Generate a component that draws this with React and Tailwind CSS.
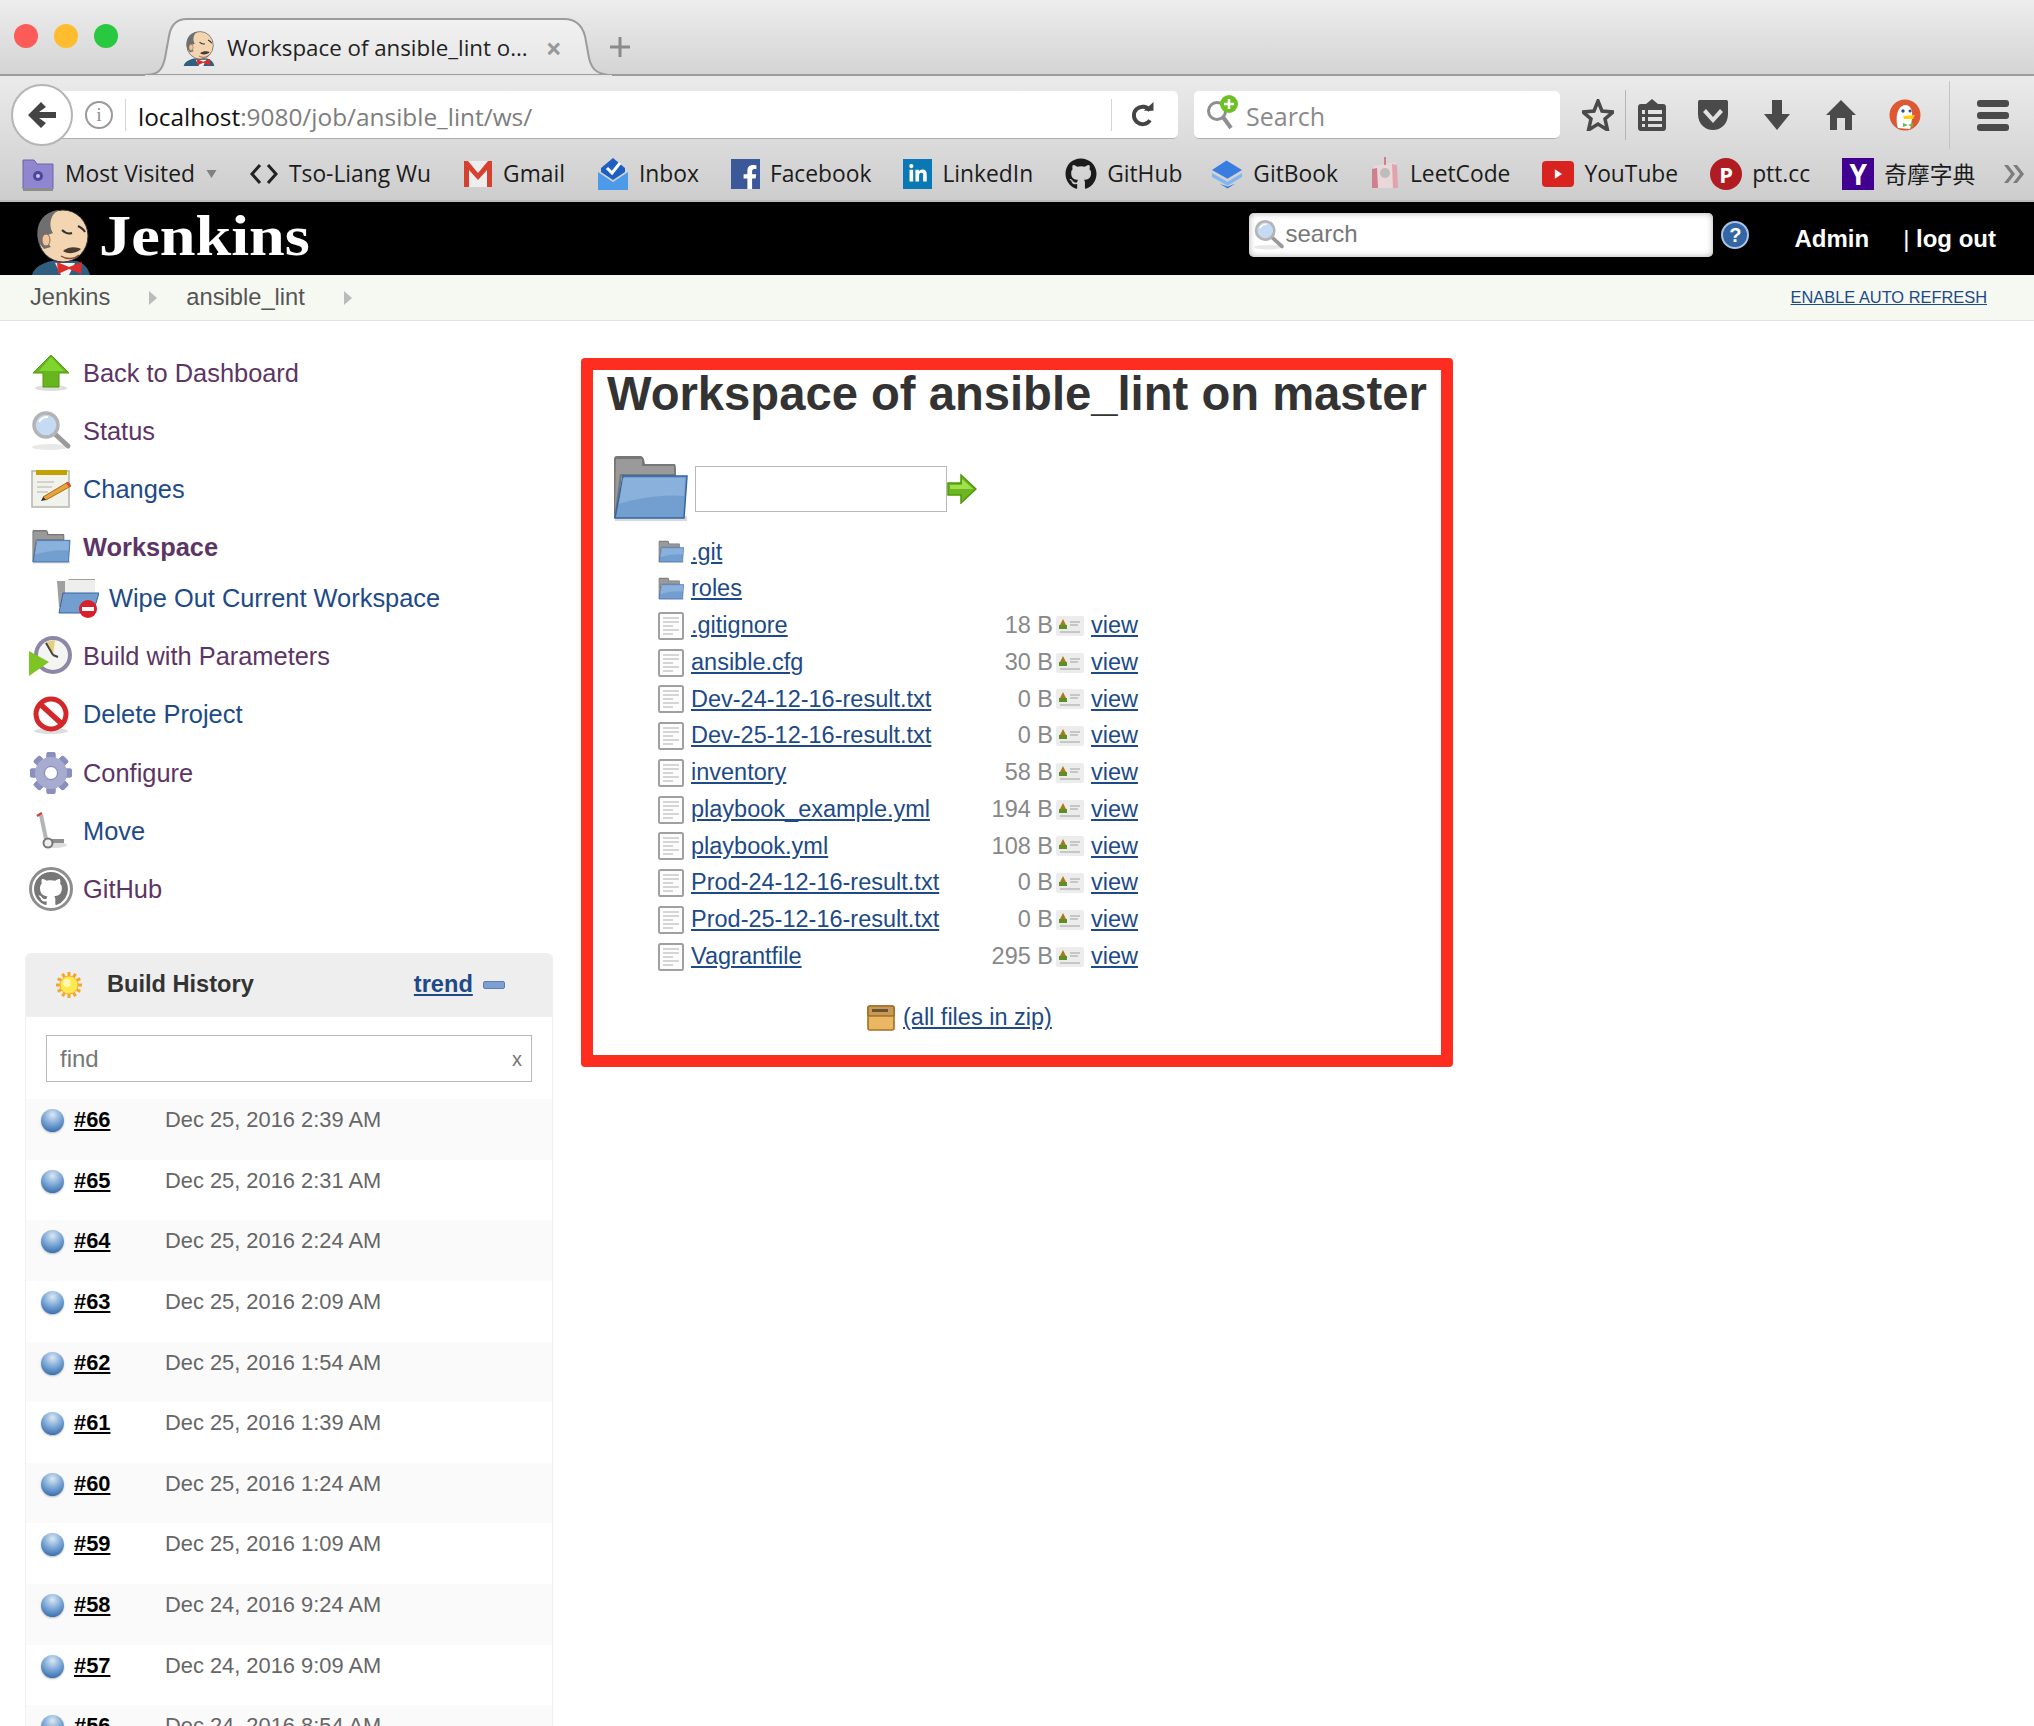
import { FaGithub, FaFacebookF, FaLinkedinIn } from 'react-icons/fa';
import { VscGithubInverted } from 'react-icons/vsc';

const chromeFont = "[font-family:'Open_Sans',sans-serif]";

// ---- browser chrome icons ----
const Butler = ({ className }) => (
  <svg viewBox="0 0 60 66" className={className}>
    <path d="M1 66C3 58 12 54 20 52L46 52C52 54 57 58 59 66Z" fill="#2f5f80" />
    <path d="M24 54H44L38 66H30Z" fill="#f4f4f4" />
    <ellipse cx="32" cy="27" rx="25" ry="26" fill="#f3d5b2" stroke="#333" strokeWidth="1" />
    <path d="M8 34C3 18 10 3 28 1C18 6 18 18 22 24L17 26C16 32 18 36 20 38L13 40Z" fill="#6f6f6f" />
    <ellipse cx="15" cy="31" rx="4" ry="6" fill="#eec5a0" stroke="#8a6a50" />
    <path d="M31 21C34 24 38 25 41 24M47 17C51 19 53 21 54 23" stroke="#333" strokeWidth="2" fill="none" />
    <path d="M32 42C38 37 46 38 50 40C46 44 38 46 32 42Z" fill="#4a3a30" />
    <path d="M30 47C36 51 44 50 48 46" stroke="#8a4a3a" strokeWidth="1.5" fill="none" />
    <path d="M26 53L38 58L51 53L50 65L38 60L27 65Z" fill="#e02b2b" />
  </svg>
);

const MostVisitedIcon = () => (
  <svg viewBox="0 0 32 34" className="w-8 h-8.5">
    <path d="M1 3H12L15 7H31V32H1Z" fill="#8f86cf" stroke="#6a64a5" />
    <circle cx="16" cy="19" r="5" fill="#4a4699" />
    <circle cx="16" cy="19" r="2" fill="#c9c5ee" />
    <rect x="1" y="31" width="30" height="3" fill="#8d8d8d" />
  </svg>
);

const CodeIcon = () => (
  <svg viewBox="0 0 30 22" className="w-[30px] h-[22px]">
    <path d="M11 2L3 11L11 20M19 2L27 11L19 20" stroke="#222" strokeWidth="3" fill="none" />
  </svg>
);

const GmailIcon = () => (
  <svg viewBox="0 0 30 30" className="w-[30px] h-[30px]">
    <rect x="1" y="2" width="28" height="26" fill="#eeeeee" />
    <path d="M1 28V2H5L15 14L25 2H29V28H24V11L15 21L6 11V28Z" fill="#d6402f" />
  </svg>
);

const InboxIcon = () => (
  <svg viewBox="0 0 32 32" className="w-8 h-8">
    <path d="M16 0L28 10V14L16 22L4 14V10Z" fill="#1f5fc4" />
    <path d="M10 10L15 15L23 5" stroke="#fff" strokeWidth="3" fill="none" />
    <path d="M1 14L16 24L31 14V32H1Z" fill="#4c9be8" />
  </svg>
);

const BrandTile = ({ color, children }) => (
  <span className={`flex items-end justify-end w-[29px] h-[30px] ${color} text-white`}>{children}</span>
);

const GitbookIcon = () => (
  <svg viewBox="0 0 34 32" className="w-[33px] h-8">
    <path d="M17 2L33 12L18 21L2 12Z" fill="#3a7de0" />
    <path d="M2 15L18 24L33 15V19L18 28L2 19Z" fill="#85b5f0" />
    <path d="M10 26L18 31L26 26L18 29Z" fill="#3a7de0" />
  </svg>
);

const LeetcodeIcon = () => (
  <svg viewBox="0 0 30 34" className="w-[30px] h-[34px]">
    <path d="M4 9L26 5L28 31L2 31Z" fill="#e9d7da" />
    <path d="M2 12L7 11L8 31H2Z" fill="#d0808c" />
    <path d="M22 7L27 8L28 31H23Z" fill="#e1a4ad" />
    <circle cx="15" cy="16" r="5" fill="#bdbdbd" />
    <path d="M15 0V8" stroke="#d0808c" strokeWidth="2" />
  </svg>
);

const YoutubeIcon = () => (
  <span className="flex items-center justify-center w-8 h-[26px] rounded-[4px] bg-[#d9231f]">
    <svg viewBox="0 0 10 12" className="w-2 h-2.5"><path d="M1 0L10 6L1 12Z" fill="#fff" /></svg>
  </span>
);

const Bookmark = ({ icon, label, cjk, className = '' }) => (
  <div className={`flex items-center gap-2.5 shrink-0 ${className}`}>
    {icon}
    <span className={`text-[22.8px] text-[#1c1c1c] leading-none ${cjk ? "[font-family:'Noto_Sans_CJK_TC',sans-serif]" : ''}`}>{label}</span>
  </div>
);

const ToolIcon = ({ className, d, viewBox = '0 0 32 32' }) => (
  <svg viewBox={viewBox} className={className}><path d={d} fill="#4a4a4a" fillRule="evenodd" /></svg>
);

const DuckIcon = () => (
  <svg viewBox="0 0 32 32" className="w-8 h-8">
    <circle cx="16" cy="16" r="15.5" fill="#de5833" />
    <path d="M9 29C6 20 8 7 16 6C22 6 24 12 23 20C22 25 22 28 21 30Z" fill="#fff" />
    <circle cx="14" cy="12" r="1.7" fill="#2d4f8e" />
    <circle cx="21" cy="12" r="1.5" fill="#2d4f8e" />
    <path d="M14 17L26 16L24 20L15 20Z" fill="#fdd20a" />
    <path d="M14 24L19 26L24 24V28L19 26L14 28Z" fill="#65bc46" />
  </svg>
);

// ---- jenkins icons ----
const Folder = ({ className }) => (
  <svg viewBox="0 0 76 66" className={className}>
    <rect x="3" y="60" width="72" height="5" fill="#d8d8d8" />
    <path d="M2 3C2 1 3 0 5 0H28C31 0 32 2 33 8H62C64 8 64 10 64 20H10L4 62H2Z" fill="#777" />
    <path d="M4 3H30V10H62V18H8L3 55Z" fill="#9a9a9a" />
    <path d="M11 20H75L72 62H3Z" fill="#729fcf" stroke="#3465a4" strokeWidth="1.5" />
    <path d="M11 22H73L72 40C50 38 25 42 7 48Z" fill="#8ab0dc" />
  </svg>
);

const UpIcon = () => (
  <svg viewBox="0 0 40 40" className="w-10 h-10">
    <ellipse cx="20" cy="35" rx="16" ry="3" fill="#ddd" />
    <path d="M20 2L38 20H28V34H12V20H2Z" fill="#67b51f" stroke="#4e9a06" />
    <path d="M20 4L33 18H8Z" fill="#8ae234" opacity=".7" />
  </svg>
);

const SearchIcon = ({ className = 'w-[42px] h-[42px]' }) => (
  <svg viewBox="0 0 42 42" className={className}>
    <ellipse cx="20" cy="37" rx="18" ry="3" fill="#e8e8e8" />
    <path d="M26 25L38 36" stroke="#9a9a9a" strokeWidth="5" strokeLinecap="round" />
    <circle cx="16" cy="15" r="12" fill="#c5daf3" stroke="#b4b4b4" strokeWidth="3.5" />
    <path d="M9 12C11 8 15 7 18 7" stroke="#fff" strokeWidth="2" fill="none" />
  </svg>
);

const NotepadIcon = () => (
  <svg viewBox="0 0 42 40" className="w-[42px] h-10">
    <rect x="2" y="2" width="37" height="36" fill="#f2f2ec" stroke="#b5b5ad" strokeWidth="1.5" />
    <rect x="6" y="1" width="31" height="5" fill="#c4a000" />
    <path d="M7 13H24M7 18H22M7 23H18" stroke="#c9c9c2" strokeWidth="1.5" />
    <path d="M13 28L38 13L41 17L16 31Z" fill="#e9a33a" stroke="#a66f12" />
    <path d="M36 14L38 13L41 17L39 18Z" fill="#d44" />
    <path d="M13 28L16 31L11 32Z" fill="#333" />
  </svg>
);

const WipeIcon = () => (
  <svg viewBox="0 0 44 42" className="w-11 h-[42px]">
    <path d="M2 4H12L14 2H40V30H4Z" fill="#9f9f9f" />
    <rect x="10" y="3" width="30" height="14" fill="#eeeeec" />
    <path d="M8 16H44L38 36H4Z" fill="#729fcf" stroke="#3465a4" />
    <circle cx="33" cy="32" r="9" fill="#d9202b" />
    <rect x="27" y="30" width="12" height="4" fill="#fff" />
  </svg>
);

const ClockIcon = () => (
  <svg viewBox="0 0 44 42" className="w-11 h-[42px]">
    <circle cx="24" cy="20" r="19" fill="#8d87a5" />
    <circle cx="24" cy="20" r="15" fill="#f4f4f2" />
    <path d="M24 20L17 7L26 5Z" fill="#e5d07a" />
    <path d="M24 20L17 8M24 20L29 22" stroke="#444" strokeWidth="2" />
    <path d="M0 16L20 27L0 41Z" fill="#7ec524" />
  </svg>
);

const DeleteIcon = () => (
  <svg viewBox="0 0 40 40" className="w-10 h-10">
    <ellipse cx="20" cy="36" rx="17" ry="3" fill="#ddd" />
    <circle cx="20" cy="19" r="15" fill="#fff" stroke="#d3272a" strokeWidth="5" />
    <path d="M9 9L31 29" stroke="#d3272a" strokeWidth="5.5" />
  </svg>
);

const GearIcon = () => (
  <svg viewBox="0 0 44 44" className="w-11 h-11">
    {[0, 45, 90, 135, 180, 225, 270, 315].map((deg) => (
      <rect key={deg} x="17.5" y="1" width="9" height="42" rx="2" fill="#8a90bd" transform={`rotate(${deg} 22 22)`} />
    ))}
    <circle cx="22" cy="22" r="16" fill="#a7abd0" />
    <circle cx="22" cy="22" r="6.5" fill="#fff" stroke="#7b80ad" />
  </svg>
);

const MoveIcon = () => (
  <svg viewBox="0 0 36 38" className="w-9 h-[38px]">
    <ellipse cx="22" cy="33" rx="12" ry="3" fill="#ddd" />
    <path d="M8 3L13 27" stroke="#b5b5b5" strokeWidth="4" />
    <path d="M4 4L9 1" stroke="#c8453f" strokeWidth="2.5" />
    <path d="M13 29H31" stroke="#8e8e8e" strokeWidth="4" />
    <circle cx="15" cy="31" r="4.5" fill="#eee" stroke="#777" strokeWidth="2" />
  </svg>
);

const GithubRingIcon = () => (
  <span className="flex items-center justify-center w-11 h-11 rounded-full border-[3px] border-[#8e8e8e] text-[#777] text-[34px]">
    <VscGithubInverted />
  </span>
);

const FileIcon = () => (
  <svg viewBox="0 0 26 28" className="w-[26px] h-7">
    <rect x="1" y="1" width="24" height="26" rx="1.5" fill="#fdfdfd" stroke="#a0a0a0" strokeWidth="2" />
    <path d="M5 6H21M5 10H21M5 14H15M5 18H21M5 22H15" stroke="#c8c8c8" strokeWidth="1.6" />
  </svg>
);

const ViewIcon = () => (
  <svg viewBox="0 0 28 24" className="w-7 h-6">
    <rect x="0" y="2" width="28" height="20" rx="2" fill="#ececec" />
    <path d="M7 5L11 13H3Z" fill="#a77a17" />
    <rect x="3" y="11" width="8" height="4" fill="#5e8e25" />
    <path d="M14 8H24M14 11H22M4 18H24" stroke="#b9b9b9" strokeWidth="1.6" />
  </svg>
);

const ZipIcon = () => (
  <svg viewBox="0 0 28 26" className="w-7 h-[26px]">
    <rect x="1" y="1" width="26" height="24" rx="2" fill="#eab765" stroke="#a5701f" strokeWidth="1.6" />
    <rect x="1" y="1" width="26" height="10" rx="2" fill="#c59a5a" stroke="#a5701f" strokeWidth="1.6" />
    <rect x="5" y="4" width="16" height="3" fill="#6b5330" />
  </svg>
);

const SunIcon = () => (
  <svg viewBox="0 0 28 28" className="w-7 h-7">
    {[0, 30, 60, 90, 120, 150].map((deg) => (
      <rect key={deg} x="12.5" y="1" width="3" height="26" fill="#f5a623" transform={`rotate(${deg} 14 14)`} />
    ))}
    <circle cx="14" cy="14" r="9" fill="#fce94f" stroke="#f5b642" />
    <circle cx="12" cy="12" r="4" fill="#fff6b0" />
  </svg>
);

const sideItems = [
  { label: 'Back to Dashboard', icon: <UpIcon />, color: 'text-[#5c3566]' },
  { label: 'Status', icon: <SearchIcon />, color: 'text-[#5c3566]' },
  { label: 'Changes', icon: <NotepadIcon />, color: 'text-[#204a87]' },
  { label: 'Workspace', icon: <Folder className="w-10 h-[34px]" />, color: 'text-[#5c3566] font-bold' },
  { label: 'Wipe Out Current Workspace', icon: <WipeIcon />, color: 'text-[#204a87]', sub: true },
  { label: 'Build with Parameters', icon: <ClockIcon />, color: 'text-[#5c3566]' },
  { label: 'Delete Project', icon: <DeleteIcon />, color: 'text-[#204a87]' },
  { label: 'Configure', icon: <GearIcon />, color: 'text-[#5c3566]' },
  { label: 'Move', icon: <MoveIcon />, color: 'text-[#204a87]' },
  { label: 'GitHub', icon: <GithubRingIcon />, color: 'text-[#5c3566]' },
];

const files = [
  { name: '.git', dir: true },
  { name: 'roles', dir: true },
  { name: '.gitignore', size: '18 B' },
  { name: 'ansible.cfg', size: '30 B' },
  { name: 'Dev-24-12-16-result.txt', size: '0 B' },
  { name: 'Dev-25-12-16-result.txt', size: '0 B' },
  { name: 'inventory', size: '58 B' },
  { name: 'playbook_example.yml', size: '194 B' },
  { name: 'playbook.yml', size: '108 B' },
  { name: 'Prod-24-12-16-result.txt', size: '0 B' },
  { name: 'Prod-25-12-16-result.txt', size: '0 B' },
  { name: 'Vagrantfile', size: '295 B' },
];

const builds = [
  ['#66', 'Dec 25, 2016 2:39 AM'],
  ['#65', 'Dec 25, 2016 2:31 AM'],
  ['#64', 'Dec 25, 2016 2:24 AM'],
  ['#63', 'Dec 25, 2016 2:09 AM'],
  ['#62', 'Dec 25, 2016 1:54 AM'],
  ['#61', 'Dec 25, 2016 1:39 AM'],
  ['#60', 'Dec 25, 2016 1:24 AM'],
  ['#59', 'Dec 25, 2016 1:09 AM'],
  ['#58', 'Dec 24, 2016 9:24 AM'],
  ['#57', 'Dec 24, 2016 9:09 AM'],
  ['#56', 'Dec 24, 2016 8:54 AM'],
];

const BrowserChrome = () => (
  <div className={chromeFont}>
    {/* Tab strip */}
    <div className="flex h-[76px] border-b-2 border-[#9c9c9c] bg-gradient-to-b from-[#ededed] to-[#d4d4d4]">
      <div className="flex gap-4 pl-[14px] pt-6 w-[155px] shrink-0">
        <span className="w-6 h-6 rounded-full bg-[#fc5b57]" />
        <span className="w-6 h-6 rounded-full bg-[#febc2e]" />
        <span className="w-6 h-6 rounded-full bg-[#28c840]" />
      </div>
      <div className="relative w-[445px] h-[76px] shrink-0 flex items-center pl-7 pt-[20px]">
        <svg viewBox="0 0 445 76" className="absolute inset-0 w-[445px] h-[76px] overflow-visible">
          <defs>
            <linearGradient id="tabfill" x1="0" y1="0" x2="0" y2="1">
              <stop offset="0" stopColor="#f1f1f1" />
              <stop offset="1" stopColor="#e6e6e6" />
            </linearGradient>
          </defs>
          <path d="M-12 75C2 75 7 72 10 58L14 36C16 24 22 19 32 19H409C421 19 427 25 430 36L434 58C437 72 445 75 459 75Z" fill="url(#tabfill)" stroke="#9c9c9c" strokeWidth="2" />
          <rect x="-10" y="75" width="467" height="2" fill="#e6e6e6" />
        </svg>
        <Butler className="relative w-[32px] h-[35px] mr-[12px]" />
        <span className="relative text-[22.3px] leading-none text-[#222] whitespace-nowrap">Workspace of ansible_lint o...</span>
        <span className="relative ml-[18px] text-[28px] font-bold text-[#999] leading-none">×</span>
      </div>
      <div className="flex items-center pt-[20px] pl-[8px]">
        <svg viewBox="0 0 24 24" className="w-6 h-6"><path d="M10.5 2H13.5V10.5H22V13.5H13.5V22H10.5V13.5H2V10.5H10.5Z" fill="#8a8a8a" /></svg>
      </div>
    </div>

    <div className="h-[126px] bg-gradient-to-b from-[#ebebeb] to-[#cdcdcd] border-b-2 border-[#bcbcbc]">
      {/* Nav toolbar */}
      <div className="flex items-center h-[78px] pl-[11px]">
        <div className="relative z-10 flex items-center justify-center w-[62px] h-[62px] rounded-full bg-white border-2 border-[#b5b5b5] shrink-0">
          <svg viewBox="0 0 32 32" className="w-8 h-8"><path d="M15 3L20 8L13 13H30V19H13L20 24L15 29L2 16Z" fill="#444" /></svg>
        </div>
        <div className="flex items-center -ml-[22px] pl-[22px] w-[1127px] h-12 rounded-r-[5px] bg-white border-b border-[#b0b0b0] shrink-0">
          <span className="flex items-center justify-center ml-[12px] w-[28px] h-[28px] rounded-full border-2 border-[#9a9a9a] text-[#8a8a8a] text-[18px] leading-none [font-family:'Liberation_Serif',serif]">i</span>
          <span className="ml-[12px] w-px h-8 bg-[#d4d4d4]" />
          <span className="ml-[12px] pt-[6px] text-[24.4px] leading-none text-[#111] whitespace-nowrap">localhost<span className="text-[#7d7d7d]">:9080/job/ansible_lint/ws/</span></span>
          <span className="ml-auto w-px h-8 bg-[#d4d4d4]" />
          <svg viewBox="0 0 32 32" className="w-7 h-7 ml-[17px] mr-[21px]">
            <path d="M24 11A10 10 0 1 0 24 22" stroke="#444" strokeWidth="4.5" fill="none" />
            <path d="M17 11H28V1Z" fill="#444" />
          </svg>
        </div>
        <div className="flex items-center ml-4 w-[366px] h-12 rounded-[5px] bg-white border-b border-[#b0b0b0] shrink-0">
          <span className="relative w-[52px] h-full shrink-0">
            <svg viewBox="0 0 36 38" className="absolute left-[10px] top-[4px] w-9 h-[38px]">
              <circle cx="13" cy="16" r="8.5" fill="none" stroke="#8e8e8e" strokeWidth="3" />
              <path d="M19 22L27 33" stroke="#8e8e8e" strokeWidth="4" />
              <circle cx="25" cy="9" r="9" fill="#6cc024" />
              <path d="M25 4V14M20 9H30" stroke="#fff" strokeWidth="2.5" />
            </svg>
          </span>
          <span className="pt-1 text-[25px] leading-none text-[#8a8a8a]">Search</span>
        </div>
        <div className="flex items-center ml-[22px] h-12 shrink-0">
          <svg viewBox="0 0 32 32" className="w-8 h-8"><path d="M16 2L20 12L31 13L23 20L25.5 31L16 25L6.5 31L9 20L1 13L12 12Z" fill="none" stroke="#4a4a4a" strokeWidth="3.5" /></svg>
          <span className="ml-[11px] w-px h-[50px] bg-[#b5b5b5]" />
          <ToolIcon className="ml-[10px] w-8 h-9" d="M16 0L22 5H27C29 5 30 6 30 8V29C30 31 29 32 27 32H5C3 32 2 31 2 29V8C2 6 3 5 5 5H10ZM6 11V15H9V11ZM12 11V15H26V11ZM6 18V22H9V18ZM12 18V22H26V18ZM6 25V28H9V25ZM12 25V28H26V25Z" />
          <ToolIcon className="ml-[29px] w-8 h-8" d="M1 3C1 1.500 2 1 3 1H29C30 1 31 1.500 31 3V15C31 25 24 31 16 31C8 31 1 25 1 15ZM9 10L16 18L23 10L26 13L16 24L6 13Z" />
          <ToolIcon className="ml-[32px] w-8 h-8" d="M11 1H21V15H29L16 31L3 15H11Z" />
          <ToolIcon className="ml-[32px] w-8 h-8" d="M16 1L31 16H27V31H20V19H12V31H5V16H1Z" />
          <span className="ml-[32px]"><DuckIcon /></span>
          <span className="ml-[28px] w-px h-[68px] bg-[#c4c4c4]" />
          <span className="ml-[27px] flex flex-col gap-[5px]">
            <span className="w-8 h-[7px] rounded-[3px] bg-[#4a4a4a]" />
            <span className="w-8 h-[7px] rounded-[3px] bg-[#4a4a4a]" />
            <span className="w-8 h-[7px] rounded-[3px] bg-[#4a4a4a]" />
          </span>
        </div>
      </div>
      {/* Bookmarks */}
      <div className="flex items-center h-[46px] -mt-[3px] pl-[22px] gap-[32px] whitespace-nowrap">
        <div className="flex items-center gap-[11px] shrink-0">
          <MostVisitedIcon />
          <span className="text-[22.8px] text-[#1c1c1c] leading-none">Most Visited</span>
          <svg viewBox="0 0 10 8" className="w-[11px] h-2"><path d="M0 0H10L5 8Z" fill="#808080" /></svg>
        </div>
        <Bookmark icon={<CodeIcon />} label="Tso-Liang Wu" />
        <Bookmark icon={<GmailIcon />} label="Gmail" />
        <Bookmark icon={<InboxIcon />} label="Inbox" />
        <Bookmark icon={<BrandTile color="bg-[#3b5998]"><FaFacebookF className="w-5 h-6" /></BrandTile>} label="Facebook" />
        <Bookmark icon={<BrandTile color="bg-[#0a78b5]"><span className="m-auto"><FaLinkedinIn className="w-5 h-5" /></span></BrandTile>} label="LinkedIn" />
        <Bookmark icon={<FaGithub className="w-8 h-8 text-[#1b1b1b]" />} label="GitHub" />
        <Bookmark icon={<GitbookIcon />} label="GitBook" className="-ml-[4px]" />
        <Bookmark icon={<LeetcodeIcon />} label="LeetCode" />
        <Bookmark icon={<YoutubeIcon />} label="YouTube" />
        <Bookmark icon={<span className="flex items-center justify-center w-8 h-8 rounded-full bg-[#b01c22] text-white font-bold text-[22px] leading-none">P</span>} label="ptt.cc" />
        <Bookmark icon={<span className="flex items-center justify-center w-8 h-8 bg-[#400090] text-white font-bold text-[28px] leading-none">Y</span>} label="奇摩字典" cjk />
        <svg viewBox="0 0 22 20" className="w-[22px] h-5 -ml-[4px] shrink-0"><path d="M1 1L8 10L1 19H5L12 10L5 1ZM10 1L17 10L10 19H14L21 10L14 1Z" fill="#7d7d7d" /></svg>
      </div>
    </div>
  </div>
);

const JenkinsHeader = () => (
  <div>
    <div className="flex items-center h-[73px] bg-black overflow-hidden">
      <Butler className="ml-[31px] w-[60px] h-[66px] self-end" />
      <span className="ml-[8px] pb-[6px] [font-family:'Liberation_Serif',serif] font-bold text-[58px] leading-none text-white origin-left scale-x-[1.108]">Jenkins</span>
      <div className="ml-auto -mt-[7px] flex items-center w-[464px] h-[44px] rounded-[5px] bg-white shadow-[inset_0_0_6px_#aaa]">
        <SearchIcon className="ml-[4px] w-8 h-8 shrink-0" />
        <span className="pb-[2px] text-[24px] leading-none text-[#777]">search</span>
      </div>
      <span className="ml-[8px] -mt-[7px] flex items-center justify-center w-7 h-7 rounded-full bg-[#3465a4] border-2 border-[#a9c4e6] text-white font-bold text-[20px] leading-none">?</span>
      <span className="ml-[45px] text-[24px] font-bold text-white">Admin</span>
      <span className="ml-[34px] mr-[38px] text-[24px] font-bold text-white"><span className="font-normal">|</span> log out</span>
    </div>
    <div className="flex items-center h-[46px] bg-[#f6f8f2] border-b border-[#e2e2e2] pl-[30px] pr-[47px] text-[23.7px] text-[#555]">
      <span>Jenkins</span>
      <svg viewBox="0 0 8 14" className="ml-[39px] w-2 h-3.5"><path d="M0 0L8 7L0 14Z" fill="#bbb" /></svg>
      <span className="ml-[29px]">ansible_lint</span>
      <svg viewBox="0 0 8 14" className="ml-[39px] w-2 h-3.5"><path d="M0 0L8 7L0 14Z" fill="#bbb" /></svg>
      <a className="ml-auto text-[16.4px] text-[#204a87] underline">ENABLE AUTO REFRESH</a>
    </div>
  </div>
);

const Sidebar = () => (
  <aside className="w-[581px] shrink-0 pl-[25px] pt-[22.5px]">
    <div className="w-[528px]">
      {sideItems.map((item) => (
        <div key={item.label} className={`flex items-center text-[25.4px] ${item.sub ? 'h-[44px] mb-[7px] pl-[29px]' : 'h-[58.2px] pl-[3px]'}`}>
          <span className="flex items-center justify-center w-[46px] shrink-0">{item.icon}</span>
          <span className={`ml-[9px] ${item.color}`}>{item.label}</span>
        </div>
      ))}
    </div>
    <div className="mt-[35px] w-[528px] rounded-t-[6px] border-x border-[#f0f0f0]">
      <div className="flex items-center h-[64px] rounded-t-[6px] bg-[#eeeeee] pl-[29px] text-[23.6px] font-bold text-[#333]">
        <SunIcon />
        <span className="ml-[24px]">Build History</span>
        <a className="ml-[160px] text-[#204a87] underline">trend</a>
        <span className="ml-[10px] w-[22px] h-[8px] rounded-[2px] bg-[#7f9fd0] border border-[#5a7fb5]" />
      </div>
      <div className="mx-5 mt-[18px] flex items-center justify-between h-[47px] border border-[#b8b8b8] pl-[13px] pr-[9px] text-[24px] text-[#777]">
        <span>find</span>
        <span className="text-[20px]">x</span>
      </div>
      <div className="mt-[17px]">
        {builds.map(([num, date], i) => (
          <div key={num} className={`flex items-start h-[60.6px] pt-[7px] text-[21.85px] leading-[28px] ${i % 2 === 0 ? 'bg-[#fafafa]' : 'bg-white'}`}>
            <span className="ml-[15px] mt-[3px] w-[23px] h-[23px] rounded-full shrink-0 bg-[radial-gradient(circle_at_50%_25%,#dbe8f2,#7ba7d6_45%,#2f66a8_90%)] shadow-[0_1px_2px_#bbb]" />
            <a className="ml-[10px] w-[91px] font-bold text-black underline">{num}</a>
            <span className="text-[#666]">{date}</span>
          </div>
        ))}
      </div>
    </div>
  </aside>
);

const WorkspacePanel = () => (
  <main className="pt-[37px]">
    <div className="w-[872px] h-[709px] rounded-[4px] border-[12px] border-[#ff2d1f] pl-[14px] overflow-hidden">
      <h1 className="text-[47.2px] leading-[48px] font-bold text-[#333] whitespace-nowrap">Workspace of ansible_lint on master</h1>
      <div className="flex items-center mt-[38px] pl-[5px]">
        <Folder className="w-[76px] h-[66px] shrink-0" />
        <input className="ml-[7px] w-[252px] h-[46px] border border-[#b8b8b8] bg-white" />
        <svg viewBox="0 0 30 30" className="w-[30px] h-[30px]">
          <path d="M14 1L29 15L14 29V21H1V9H14Z" fill="#6cb621" stroke="#4e9a06" strokeWidth="1.5" />
          <path d="M15 5L26 15H3V11H15Z" fill="#a2df4f" />
        </svg>
      </div>
      <div className="mt-[12px] pl-[51px]">
        {files.map((f) => (
          <div key={f.name} className="grid grid-cols-[33px_250px_112px_8px_auto] items-center h-[36.75px] text-[23.5px] leading-none">
            {f.dir ? <Folder className="w-[26px] h-[24px]" /> : <FileIcon />}
            <a className="text-[#204a87] underline whitespace-nowrap">{f.name}</a>
            {f.dir ? (
              <span />
            ) : (
              <>
                <span className="text-right text-[#888]">{f.size}</span>
                <span className="col-start-4 w-7 ml-[3px]"><ViewIcon /></span>
                <a className="col-start-5 ml-[30px] text-[#204a87] underline">view</a>
              </>
            )}
          </div>
        ))}
      </div>
      <div className="flex items-center mt-[30px] pl-[260px] text-[23.5px] leading-none">
        <ZipIcon />
        <a className="ml-[8px] text-[#204a87] underline">(all files in zip)</a>
      </div>
    </div>
  </main>
);

export default function App() {
  return (
    <div className="h-[1726px] w-[2034px] overflow-hidden bg-white [font-family:'Liberation_Sans',sans-serif]">
      <BrowserChrome />
      <JenkinsHeader />
      <div className="flex">
        <Sidebar />
        <WorkspacePanel />
      </div>
    </div>
  );
}
